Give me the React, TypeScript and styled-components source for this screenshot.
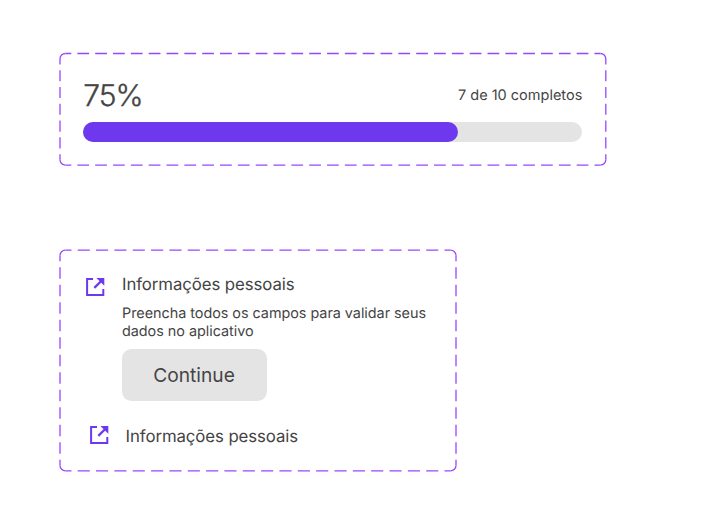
import React from "react";
import styled, { createGlobalStyle } from "styled-components";

const GlobalStyle = createGlobalStyle`
  * { box-sizing: border-box; }
  body {
    margin: 0;
    background: #ffffff;
    color: #444444;
    font-family: Inter, "Liberation Sans", sans-serif;
    text-rendering: geometricPrecision;
  }
`;

const Page = styled.main`
  display: flex;
  flex-direction: column;
  align-items: flex-start;
  gap: 85px;
  width: 703px;
  height: 532px;
  padding: 53px 0 0 60px;
  overflow: hidden;
`;

const Card = styled.section<{ $w: number; $h: number }>`
  position: relative;
  width: ${(p) => p.$w}px;
  height: ${(p) => p.$h}px;
`;

const FrameSvg = styled.svg`
  position: absolute;
  inset: 0;
  overflow: visible;
  pointer-events: none;
`;

const ProgressBody = styled.div`
  display: flex;
  flex-direction: column;
  padding: 24px 23.7px 0 23.3px;
`;

const ProgressHeader = styled.header`
  display: flex;
  justify-content: space-between;
  align-items: center;
  height: 36px;
  margin-bottom: 9.4px;
`;

const Percent = styled.span`
  padding-top: 1px;
  font-size: 30px;
  font-weight: 300;
  line-height: 36px;
  letter-spacing: -1.1px;
  -webkit-text-stroke: 0.35px #444444;
`;

const Count = styled.span`
  padding-top: 2px;
  font-size: 14.5px;
  line-height: 18px;
`;

const Track = styled.div`
  height: 19.4px;
  border-radius: 10px;
  background: #e4e4e4;
`;

const Fill = styled.div`
  height: 100%;
  border-radius: 10px;
  background: #6e38ee;
`;

const Steps = styled.div`
  display: flex;
  flex-direction: column;
  gap: 26.3px;
  padding-top: 25px;
`;

const Step = styled.article<{ $indent: number }>`
  display: flex;
  align-items: flex-start;
  gap: ${(p) => 62 - 20 - p.$indent}px;
  padding-left: ${(p) => p.$indent}px;

  & + & {
    gap: 16.6px;
  }
`;

const IconBox = styled.span<{ $top: number }>`
  display: flex;
  width: 20px;
  height: 20px;
  margin-top: ${(p) => p.$top}px;
`;

const StepContent = styled.div`
  display: flex;
  flex-direction: column;
  align-items: flex-start;
`;

const Title = styled.h2`
  margin: 0;
  font-size: 16.8px;
  font-weight: 400;
  line-height: 21px;
  letter-spacing: -0.09px;
  white-space: nowrap;
`;

const Description = styled.p`
  margin: 9px 0 8px;
  width: 320px;
  font-size: 14.4px;
  line-height: 18px;
  letter-spacing: -0.03px;
`;

const Button = styled.button`
  width: 145px;
  height: 51.7px;
  padding: 0 1px 0 0;
  border: 0;
  border-radius: 9.5px;
  background: #e4e4e4;
  color: inherit;
  font-family: inherit;
  font-size: 19.2px;
`;

const RADIUS = 5.4;

type FrameProps = { w: number; h: number; top: number; cols: number; rows: number };

function DashedFrame({ w, h, top, cols, rows }: FrameProps) {
  const r = RADIUS;
  const px = (w - 2 * r) / cols;
  const py = (h - 2 * r) / rows;
  const horizontal = { strokeDasharray: `${px * 0.66} ${px * 0.34}`, strokeDashoffset: px * 0.33 };
  const vertical = { strokeDasharray: `${py * 0.66} ${py * 0.34}`, strokeDashoffset: py * 0.33 };
  return (
    <FrameSvg width={Math.ceil(w)} height={Math.ceil(h)} fill="none" stroke="#9747ff" strokeWidth="1.3" aria-hidden="true">
      <g transform={`translate(0 ${top})`}>
        <path d={`M${r} 0H${w - r}M${r} ${h}H${w - r}`} {...horizontal} />
        <path d={`M0 ${r}V${h - r}M${w} ${r}V${h - r}`} {...vertical} />
        <path
          d={`M0 ${r}A${r} ${r} 0 0 1 ${r} 0M${w - r} 0A${r} ${r} 0 0 1 ${w} ${r}M${w} ${h - r}A${r} ${r} 0 0 1 ${w - r} ${h}M${r} ${h}A${r} ${r} 0 0 1 0 ${h - r}`}
        />
      </g>
    </FrameSvg>
  );
}

function OpenIcon({ top }: { top: number }) {
  return (
    <IconBox $top={top}>
      <svg width="20" height="20" viewBox="0 0 20 20" fill="none" aria-hidden="true">
        <path d="M8 1.9H2.1V17.9H18.3V12" stroke="#6e38ee" strokeWidth="2" />
        <path d="M9.3 10.9L16 4.2" stroke="#6e38ee" strokeWidth="2.3" />
        <path d="M11.4 0.9H19.3V8.8Z" fill="#6e38ee" />
      </svg>
    </IconBox>
  );
}

export default function App() {
  const progress = 75;
  return (
    <>
      <GlobalStyle />
      <Page>
        <Card $w={546} $h={112}>
          <DashedFrame w={545.8} h={111.6} top={0.5} cols={30} rows={6} />
          <ProgressBody>
            <ProgressHeader>
              <Percent>{progress}%</Percent>
              <Count>7 de 10 completos</Count>
            </ProgressHeader>
            <Track>
              <Fill style={{ width: `${progress}%` }} />
            </Track>
          </ProgressBody>
        </Card>
        <Card $w={396} $h={221}>
          <DashedFrame w={396} h={220.6} top={0.2} cols={21} rows={12} />
          <Steps>
            <Step $indent={25}>
              <OpenIcon top={2} />
              <StepContent>
                <Title>Informações pessoais</Title>
                <Description>Preencha todos os campos para validar seus dados no aplicativo</Description>
                <Button type="button">Continue</Button>
              </StepContent>
            </Step>
            <Step $indent={29}>
              <OpenIcon top={-1.5} />
              <StepContent>
                <Title>Informações pessoais</Title>
              </StepContent>
            </Step>
          </Steps>
        </Card>
      </Page>
    </>
  );
}
